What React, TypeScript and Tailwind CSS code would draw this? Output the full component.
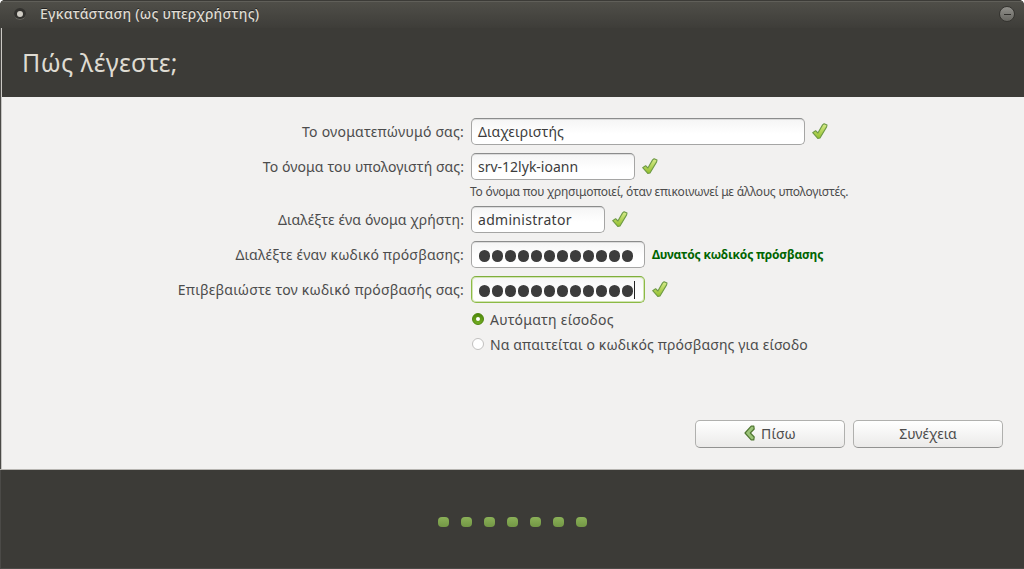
import type { ReactNode } from "react";

const DOTS = [0, 1, 2, 3, 4, 5, 6];
const BULLETS = [0, 1, 2, 3, 4, 5, 6, 7, 8, 9, 10, 11];

function Check() {
  return (
    <svg width="18" height="18" viewBox="0 0 18 18" className="-mt-[2px] shrink-0">
      <defs>
        <linearGradient id="tick" x1="0" y1="0" x2="0" y2="1">
          <stop offset="0" stopColor="#d8ec8c" />
          <stop offset="1" stopColor="#93bf2c" />
        </linearGradient>
      </defs>
      <path
        d="M1.7 10.6 L4.6 8.7 L6.9 11 L11.6 2.9 L13.1 1.7 L16 3 L15.6 4.9 L9 16 L6.8 16.4 Z"
        fill="url(#tick)"
        stroke="#6e9a45"
        strokeWidth="1.1"
        strokeLinejoin="round"
      />
    </svg>
  );
}

function Field({ className, focused = false, children }: { className: string; focused?: boolean; children: ReactNode }) {
  const tone = focused
    ? "border-[#8cba46] border-t-[#7fae3c] shadow-[inset_0_0_0_1px_#d3e5b4]"
    : "border-[#a5a5a4] border-t-[#8b8c8c] shadow-[inset_0_1px_0_#dcdcdc]";
  return (
    <div
      className={`flex h-[27px] shrink-0 items-center rounded-[5px] border bg-linear-to-b from-[#f5f5f5] to-white to-60% pl-[6px] text-[#3c3c3c] ${tone} ${className}`}
    >
      {children}
    </div>
  );
}

function Row({ label, tracking, children }: { label: string; tracking: string; children: ReactNode }) {
  return (
    <div className="flex h-[27px] items-center">
      <div className={`w-[464px] shrink-0 text-right ${tracking}`}>{label}</div>
      <div className="flex items-center pl-[7px]">{children}</div>
    </div>
  );
}

function Password({ caret = false }: { caret?: boolean }) {
  return (
    <div className="flex items-center gap-[1.5px] pt-[3px] pl-[0.75px]">
      {BULLETS.map((i) => (
        <span key={i} className="h-[12px] w-[11.5px] rounded-full bg-[#3c3c3c]" />
      ))}
      {caret && <span className="-mt-[3px] -ml-[0.75px] h-[18px] w-px bg-[#222]" />}
    </div>
  );
}

export default function App() {
  return (
    <div className="h-[569px] w-[1024px] overflow-hidden bg-white font-['Noto_Sans','Open_Sans',sans-serif] text-[14px] leading-[20px] whitespace-nowrap text-[#4c4c4c]">
      <div className="flex h-full flex-col overflow-hidden rounded-t-[5px] bg-[#3c3b37]">
        <div className="flex h-[28px] shrink-0 items-center border-t border-[#3c3b37] bg-linear-to-b from-[#504f49] to-[#3e3d39] pb-px shadow-[inset_0_1px_0_#605f59]">
          <div className="ml-[14px] flex h-[12px] w-[12px] items-center justify-center rounded-full border-b border-[#65645e] bg-[#32312e]">
            <span className="h-[6px] w-[6px] rounded-full bg-[#d0cdc5]" />
          </div>
          <div className="-mt-px ml-[14px] text-[14px] font-medium tracking-[0.22px] text-[#dfdbd2] [text-shadow:0_-1px_0_#222]">
            <span>Εγκατάσταση (ως υπερχρήστης)</span>
          </div>
          <div className="mr-[9px] ml-auto flex h-[16px] w-[16px] items-center justify-center rounded-full border border-[#353430] bg-linear-to-b from-[#91908b] to-[#686762]">
            <span className="h-px w-[7px] bg-[#2f2e2b]" />
          </div>
        </div>

        <div className="flex min-h-0 flex-1 flex-col border-l border-[#4b4a47]">
          <div className="flex h-[69px] shrink-0 items-center border-l border-[#cbc9c4] pb-[2px] pl-[20px] text-[25px] leading-[34px] tracking-[0.36px] text-[#dfdbd2]">
            <span>Πώς λέγεστε;</span>
          </div>

          <div className="-ml-px flex h-[373px] shrink-0 flex-col border-b border-b-[#b7b5b1] bg-[#f2f1f0] pt-[21px] shadow-[inset_1px_0_0_#4b4a47,inset_2px_0_0_#c6c5c3]">
            <Row label="Το ονοματεπώνυμό σας:" tracking="tracking-[0.25px]">
              <Field className="w-[334px]">
                <span className="tracking-[0.1px]">Διαχειριστής</span>
              </Field>
              <span className="ml-[6px]"><Check /></span>
            </Row>
            <div className="h-[8px]" />
            <Row label="Το όνομα του υπολογιστή σας:" tracking="tracking-[0.11px]">
              <Field className="w-[164px]">
                <span>srv-12lyk-ioann</span>
              </Field>
              <span className="ml-[6px]"><Check /></span>
            </Row>
            <div className="flex h-[26px] items-center pb-[2px] pl-[470px] text-[12px] tracking-[-0.21px]">
              <span>Το όνομα που χρησιμοποιεί, όταν επικοινωνεί με άλλους υπολογιστές.</span>
            </div>
            <Row label="Διαλέξτε ένα όνομα χρήστη:" tracking="tracking-[0.11px]">
              <Field className="w-[134px]">
                <span className="tracking-[0.3px]">administrator</span>
              </Field>
              <span className="ml-[6px]"><Check /></span>
            </Row>
            <div className="h-[8px]" />
            <Row label="Διαλέξτε έναν κωδικό πρόσβασης:" tracking="tracking-[0.17px]">
              <Field className="w-[174px]"><Password /></Field>
              <span className="ml-[7px] text-[12px] font-bold tracking-[-0.19px] text-[#006400]">Δυνατός κωδικός πρόσβασης</span>
            </Row>
            <div className="h-[8px]" />
            <Row label="Επιβεβαιώστε τον κωδικό πρόσβασής σας:" tracking="tracking-[0.2px]">
              <Field className="w-[174px]" focused><Password caret /></Field>
              <span className="ml-[6px]"><Check /></span>
            </Row>
            <div className="mt-[4px] flex h-[25px] items-center pl-[472px]">
              <span className="-mt-[2px] flex h-[12px] w-[12px] items-center justify-center rounded-full border border-[#4d850b] bg-linear-to-b from-[#4f890a] to-[#73ad22]">
                <span className="h-[4px] w-[4px] rounded-full bg-white" />
              </span>
              <span className="ml-[6px] tracking-[0.26px]">Αυτόματη είσοδος</span>
            </div>
            <div className="flex h-[25px] items-center pl-[472px]">
              <span className="-mt-[2px] h-[12px] w-[12px] rounded-full border border-[#c1c0bf] bg-white" />
              <span className="ml-[6px] tracking-[0.12px]">Να απαιτείται ο κωδικός πρόσβασης για είσοδο</span>
            </div>
            <div className="mt-auto mr-[21px] mb-[21px] flex justify-end gap-[8px]">
              <button className="flex h-[28px] w-[150px] items-center justify-center rounded-[5px] border border-[#b0b0ae] border-b-[#929291] bg-linear-to-b from-white to-[#ebeae9]">
                <svg width="12" height="16" viewBox="0 0 12 16" className="mr-[5px] -mt-[3px]">
                  <path
                    d="M1 8 L7.2 1.2 L9.8 1.2 L10.2 4 L6.3 8 L10.2 12 L9.8 14.8 L7.2 14.8 Z"
                    fill="#9cc479"
                    stroke="#4f7630"
                    strokeWidth="1.2"
                    strokeLinejoin="round"
                  />
                </svg>
                <span className="tracking-[0.2px]">Πίσω</span>
              </button>
              <button className="flex h-[28px] w-[150px] items-center justify-center rounded-[5px] border border-[#b0b0ae] border-b-[#929291] bg-linear-to-b from-white to-[#ebeae9]">
                <span>Συνέχεια</span>
              </button>
            </div>
          </div>

          <div className="flex flex-1 items-start gap-[12px] border-b border-[#4b4a47] pt-[47px] pl-[437px]">
            {DOTS.map((i) => (
              <span key={i} className="h-[10px] w-[11px] rounded-[4px] bg-linear-to-b from-[#8bb158] to-[#739745]" />
            ))}
          </div>
        </div>
      </div>
    </div>
  );
}
